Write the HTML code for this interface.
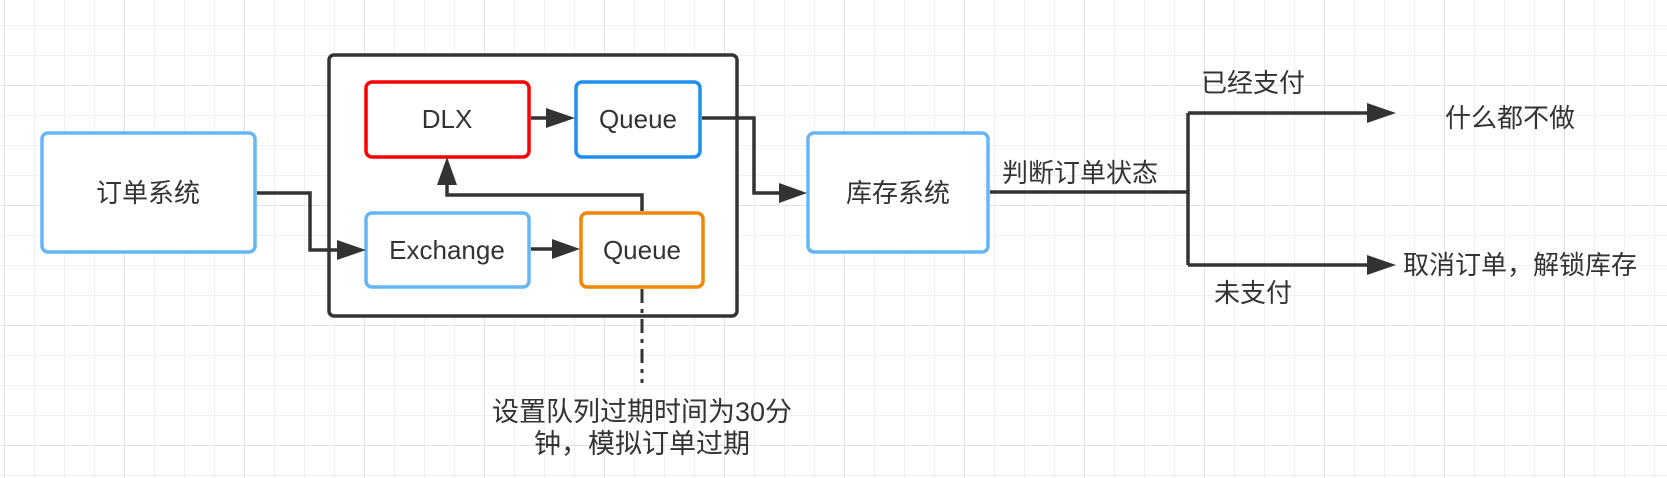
<!DOCTYPE html>
<html><head><meta charset="utf-8"><style>
html,body{margin:0;padding:0;background:#fff;}
svg{display:block;}
text{font-family:"Liberation Sans","Noto Sans CJK SC",sans-serif;fill:#333;dominant-baseline:central;text-anchor:middle;}
</style></head><body>
<svg width="1667" height="478" viewBox="0 0 1667 478" xmlns="http://www.w3.org/2000/svg">
<defs>
<pattern id="g" x="4" y="25" width="30" height="30" patternUnits="userSpaceOnUse">
<path d="M0.5 0V30M0 0.5H30" stroke="#f0f0f0" stroke-width="1" fill="none"/>
</pattern>
<pattern id="G" x="4" y="85" width="120" height="120" patternUnits="userSpaceOnUse">
<path d="M0.5 0V120M0 0.5H120" stroke="#e2e2e2" stroke-width="1" fill="none"/>
</pattern>
</defs>
<rect width="1667" height="478" fill="url(#g)"/>
<rect width="1667" height="478" fill="url(#G)"/>

<g fill="#fff" stroke-width="3.5">
<rect x="329" y="55" width="408" height="261" rx="5" stroke="#333"/>
<rect x="42" y="133" width="213" height="119" rx="6" stroke="#66b5f5"/>
<rect x="366" y="82" width="163" height="75" rx="6" stroke="#ff0000"/>
<rect x="576" y="82" width="124" height="75" rx="6" stroke="#1e8fef"/>
<rect x="366" y="213" width="163" height="74" rx="6" stroke="#66b5f5"/>
<rect x="581" y="213" width="122" height="74" rx="6" stroke="#f08705"/>
<rect x="808" y="133" width="180" height="119" rx="6" stroke="#66b5f5"/>
</g>

<g fill="none" stroke="#333" stroke-width="3.5">
<path d="M257 193H310V250H340"/>
<path d="M531 118H548"/>
<path d="M702 118H754V193H782"/>
<path d="M531 249H554"/>
<path d="M642 211V195H447V183"/>
<path d="M990 192H1188M1188 113V265M1188 113H1369M1188 265H1369"/>
<path d="M642 289V383" stroke-dasharray="14 6 4 6" stroke-width="3"/>
</g>
<g fill="#333">
<path d="M337 240L366 250L337 260Z"/>
<path d="M546 108L575 118L546 128Z"/>
<path d="M779 183L807 193L779 203Z"/>
<path d="M552 239L580 249L552 259Z"/>
<path d="M437 185L447 157L457 185Z"/>
<path d="M1367 103L1396 113L1367 123Z"/>
<path d="M1367 255L1396 265L1367 275Z"/>
</g>

<g font-size="26">
<text x="148" y="193">订单系统</text>
<text x="447" y="119">DLX</text>
<text x="638" y="119">Queue</text>
<text x="447" y="250">Exchange</text>
<text x="642" y="250">Queue</text>
<text x="898" y="193">库存系统</text>
<text x="1080" y="173">判断订单状态</text>
<text x="1253" y="83">已经支付</text>
<text x="1510" y="118">什么都不做</text>
<text x="1520" y="265">取消订单，解锁库存</text>
<text x="1253" y="293">未支付</text>
</g>
<g font-size="27">
<text x="642" y="412">设置队列过期时间为30分</text>
<text x="642" y="444">钟，模拟订单过期</text>
</g>
</svg>
</body></html>
